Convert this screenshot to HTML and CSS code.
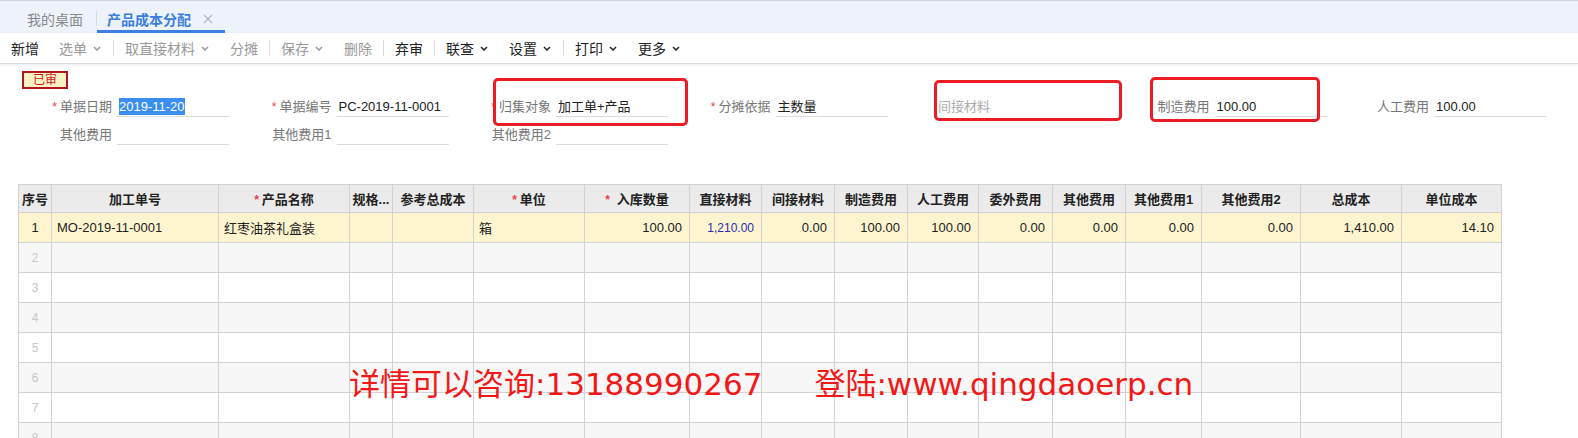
FILE: index.html
```html
<!DOCTYPE html>
<html lang="zh-CN">

<head>
    <meta charset="UTF-8">
    <title>产品成本分配</title>
    <link rel="stylesheet" href="styles.css">
</head>

<body>

    <div class="tabs">
        <div class="tab">我的桌面</div>
        <div class="tab active">产品成本分配
            <svg class="close" width="10" height="10" viewBox="0 0 10 10"><path d="M1 1L9 9M9 1L1 9" stroke="#b4b9c2" stroke-width="1.3" fill="none"/></svg>
        </div>
    </div>

    <div class="toolbar">
        <span class="btn">新增</span>
        <span class="btn off">选单<svg class="caret" width="8" height="5" viewBox="0 0 8 5"><path d="M1 1L4 4L7 1" stroke="currentColor" stroke-width="1.5" fill="none"/></svg></span>
        <span class="sep"></span>
        <span class="btn off">取直接材料<svg class="caret" width="8" height="5" viewBox="0 0 8 5"><path d="M1 1L4 4L7 1" stroke="currentColor" stroke-width="1.5" fill="none"/></svg></span>
        <span class="btn off">分摊</span>
        <span class="sep"></span>
        <span class="btn off">保存<svg class="caret" width="8" height="5" viewBox="0 0 8 5"><path d="M1 1L4 4L7 1" stroke="currentColor" stroke-width="1.5" fill="none"/></svg></span>
        <span class="btn off">删除</span>
        <span class="sep"></span>
        <span class="btn">弃审</span>
        <span class="sep"></span>
        <span class="btn">联查<svg class="caret" width="8" height="5" viewBox="0 0 8 5"><path d="M1 1L4 4L7 1" stroke="currentColor" stroke-width="1.5" fill="none"/></svg></span>
        <span class="btn">设置<svg class="caret" width="8" height="5" viewBox="0 0 8 5"><path d="M1 1L4 4L7 1" stroke="currentColor" stroke-width="1.5" fill="none"/></svg></span>
        <span class="sep"></span>
        <span class="btn">打印<svg class="caret" width="8" height="5" viewBox="0 0 8 5"><path d="M1 1L4 4L7 1" stroke="currentColor" stroke-width="1.5" fill="none"/></svg></span>
        <span class="btn">更多<svg class="caret" width="8" height="5" viewBox="0 0 8 5"><path d="M1 1L4 4L7 1" stroke="currentColor" stroke-width="1.5" fill="none"/></svg></span>
    </div>

    <div class="form">
        <div class="stamp">已审</div>

        <div class="fields">
            <div class="item"><label><em>*</em>单据日期</label><div class="field"><span class="sel">2019-11-20</span></div></div>
            <div class="item"><label><em>*</em>单据编号</label><div class="field">PC-2019-11-0001</div></div>
            <div class="item"><label><em>*</em>归集对象</label><div class="field">加工单+产品</div></div>
            <div class="item"><label><em>*</em>分摊依据</label><div class="field">主数量</div></div>
            <div class="item"><label class="light">间接材料</label><div class="field none"></div></div>
            <div class="item"><label>制造费用</label><div class="field">100.00</div></div>
            <div class="item"><label>人工费用</label><div class="field">100.00</div></div>

            <div class="item"><label>其他费用</label><div class="field"></div></div>
            <div class="item"><label>其他费用1</label><div class="field"></div></div>
            <div class="item"><label>其他费用2</label><div class="field"></div></div>
        </div>

        <!-- red marks drawn over the form -->
        <div class="mark m1"></div>
        <div class="mark m2"></div>
        <div class="mark m3"></div>
    </div>

    <table class="grid">
        <colgroup>
            <col style="width: 33px">
            <col style="width: 167px">
            <col style="width: 131px">
            <col style="width: 43px">
            <col style="width: 81px">
            <col style="width: 111px">
            <col style="width: 105px">
            <col style="width: 72px">
            <col style="width: 73px">
            <col style="width: 73px">
            <col style="width: 71px">
            <col style="width: 74px">
            <col style="width: 73px">
            <col style="width: 76px">
            <col style="width: 99px">
            <col style="width: 101px">
            <col style="width: 100px">
        </colgroup>
        <thead>
            <tr>
                <th>序号</th>
                <th>加工单号</th>
                <th><em>*</em>产品名称</th>
                <th>规格...</th>
                <th>参考总成本</th>
                <th><em>*</em>单位</th>
                <th><em>*</em> 入库数量</th>
                <th>直接材料</th>
                <th>间接材料</th>
                <th>制造费用</th>
                <th>人工费用</th>
                <th>委外费用</th>
                <th>其他费用</th>
                <th>其他费用1</th>
                <th>其他费用2</th>
                <th>总成本</th>
                <th>单位成本</th>
            </tr>
        </thead>
        <tbody>
            <tr class="cur">
                <td class="no">1</td>
                <td>MO-2019-11-0001</td>
                <td>红枣油茶礼盒装</td>
                <td></td>
                <td></td>
                <td>箱</td>
                <td class="num">100.00</td>
                <td class="num link">1,210.00</td>
                <td class="num">0.00</td>
                <td class="num">100.00</td>
                <td class="num">100.00</td>
                <td class="num">0.00</td>
                <td class="num">0.00</td>
                <td class="num">0.00</td>
                <td class="num">0.00</td>
                <td class="num">1,410.00</td>
                <td class="num">14.10</td>
            </tr>
            <tr><td class="no">2</td><td></td><td></td><td></td><td></td><td></td><td></td><td></td><td></td><td></td><td></td><td></td><td></td><td></td><td></td><td></td><td></td></tr>
            <tr><td class="no">3</td><td></td><td></td><td></td><td></td><td></td><td></td><td></td><td></td><td></td><td></td><td></td><td></td><td></td><td></td><td></td><td></td></tr>
            <tr><td class="no">4</td><td></td><td></td><td></td><td></td><td></td><td></td><td></td><td></td><td></td><td></td><td></td><td></td><td></td><td></td><td></td><td></td></tr>
            <tr><td class="no">5</td><td></td><td></td><td></td><td></td><td></td><td></td><td></td><td></td><td></td><td></td><td></td><td></td><td></td><td></td><td></td><td></td></tr>
            <tr><td class="no">6</td><td></td><td></td><td></td><td></td><td></td><td></td><td></td><td></td><td></td><td></td><td></td><td></td><td></td><td></td><td></td><td></td></tr>
            <tr><td class="no">7</td><td></td><td></td><td></td><td></td><td></td><td></td><td></td><td></td><td></td><td></td><td></td><td></td><td></td><td></td><td></td><td></td></tr>
            <tr><td class="no">8</td><td></td><td></td><td></td><td></td><td></td><td></td><td></td><td></td><td></td><td></td><td></td><td></td><td></td><td></td><td></td><td></td></tr>
        </tbody>
    </table>

    <div class="watermark"><span>详情可以咨询:13188990267</span><span>登陆:www.qingdaoerp.cn</span></div>

</body>
</html>
```

FILE: styles.css
```css
body {
    margin: 0;
    height: 438px;
    overflow: hidden;
    position: relative;
    font-family: "Liberation Sans", "Noto Sans CJK SC", sans-serif;
    font-size: 13px;
    color: #333;
    background: #fff;
}

/* ---------- tabs ---------- */
.tabs {
    height: 33px;
    box-sizing: border-box;
    border-top: 1px solid #d3d8e0;
    background: #eef3fb;
    display: flex;
    padding-left: 13px;
    font-size: 14px;
}

.tab {
    display: flex;
    align-items: center;
    padding: 3px 14px 0;
    color: #888;
    position: relative;
}

.tab:first-child::after {
    content: "";
    position: absolute;
    right: 0;
    top: 10px;
    height: 15px;
    width: 1px;
    background: #d6dbe3;
}

.tab.active {
    padding: 3px 12px 0 10px;
    color: #3b7fe0;
    font-weight: bold;
    box-shadow: inset 0 -3px #3d80e2;
}

.close {
    margin-left: 12px;
}

/* ---------- toolbar ---------- */
.toolbar {
    height: 30px;
    display: flex;
    align-items: center;
    padding-left: 1px;
    border-bottom: 1px solid #dedede;
    box-shadow: 0 1px 3px rgba(0, 0, 0, 0.08);
    font-size: 14px;
}

.btn {
    display: flex;
    align-items: center;
    padding: 0 10px;
    color: #222;
}

.btn.off {
    color: #999;
}

.caret {
    margin-left: 6px;
    margin-right: 1px;
    margin-top: 1px;
}

.sep {
    width: 1px;
    height: 16px;
    background: #dcdcdc;
    margin: 0 1px;
}

/* ---------- form ---------- */
.form {
    position: relative;
    padding-top: 7px;
}

.stamp {
    margin-left: 22px;
    width: 46px;
    height: 18px;
    box-sizing: border-box;
    border: 2px solid #b3171b;
    background: #fdf1c6;
    color: #d0121b;
    font-size: 12px;
    line-height: 14px;
    text-align: center;
}

.fields {
    display: grid;
    grid-template-columns: repeat(7, 219.5px);
    row-gap: 8px;
    padding-left: 14px;
    margin-top: 8px;
}

.item {
    display: flex;
    height: 20px;
}

.item label {
    width: 98px;
    text-align: right;
    line-height: 20px;
    color: #777;
    white-space: nowrap;
}

.item label.light {
    color: #aaa;
}

em {
    font-style: normal;
    color: #e8424a;
    font-size: 12px;
    margin-right: 3px;
}

.field {
    width: 112px;
    margin-left: 5px;
    box-sizing: border-box;
    border-bottom: 1px solid #dcdcdc;
    padding-left: 2px;
    line-height: 19px;
    color: #222;
    white-space: nowrap;
}

.field.none {
    border-bottom: none;
}

.sel {
    background: #3a8ef0;
    color: #fff;
    padding: 1px 0;
}

.mark {
    position: absolute;
    border: 3px solid #ec1c24;
    border-radius: 5px;
    box-sizing: border-box;
}

.m1 {
    left: 493px;
    top: 14px;
    width: 195px;
    height: 48px;
}

.m2 {
    left: 934px;
    top: 16px;
    width: 188px;
    height: 41px;
}

.m3 {
    left: 1150px;
    top: 13px;
    width: 170px;
    height: 45px;
}

/* ---------- grid ---------- */
.grid {
    margin: 39px 0 0 18px;
    width: 1483px;
    table-layout: fixed;
    border-collapse: collapse;
}

.grid th,
.grid td {
    border: 1px solid #d2d2d2;
    white-space: nowrap;
    overflow: hidden;
}

.grid th {
    height: 27px;
    padding: 0 2px;
    background: #ebebeb;
    color: #222;
    font-weight: bold;
    text-align: center;
}

.grid td {
    height: 29px;
    padding: 0 5px;
    color: #222;
}

.grid tbody tr:nth-child(even) td {
    background: #f7f7f7;
}

.grid tbody tr.cur td {
    background: #fdf5d0;
}

.grid td.no {
    text-align: center;
    padding: 0;
    color: #c6c6c6;
    font-size: 12px;
}

.grid tr.cur td.no {
    color: #222;
    font-size: 13px;
}

.grid td.num {
    text-align: right;
    padding-right: 7px;
}

.grid td.link {
    color: #2b2bb0;
    font-size: 12px;
}

/* ---------- red notice over the page ---------- */
.watermark {
    position: absolute;
    left: 349px;
    top: 362px;
    display: flex;
    gap: 52px;
    font-family: "DejaVu Sans", "Noto Sans CJK SC", sans-serif;
    font-size: 31px;
    line-height: 44px;
    color: #f21818;
    white-space: nowrap;
}
```
